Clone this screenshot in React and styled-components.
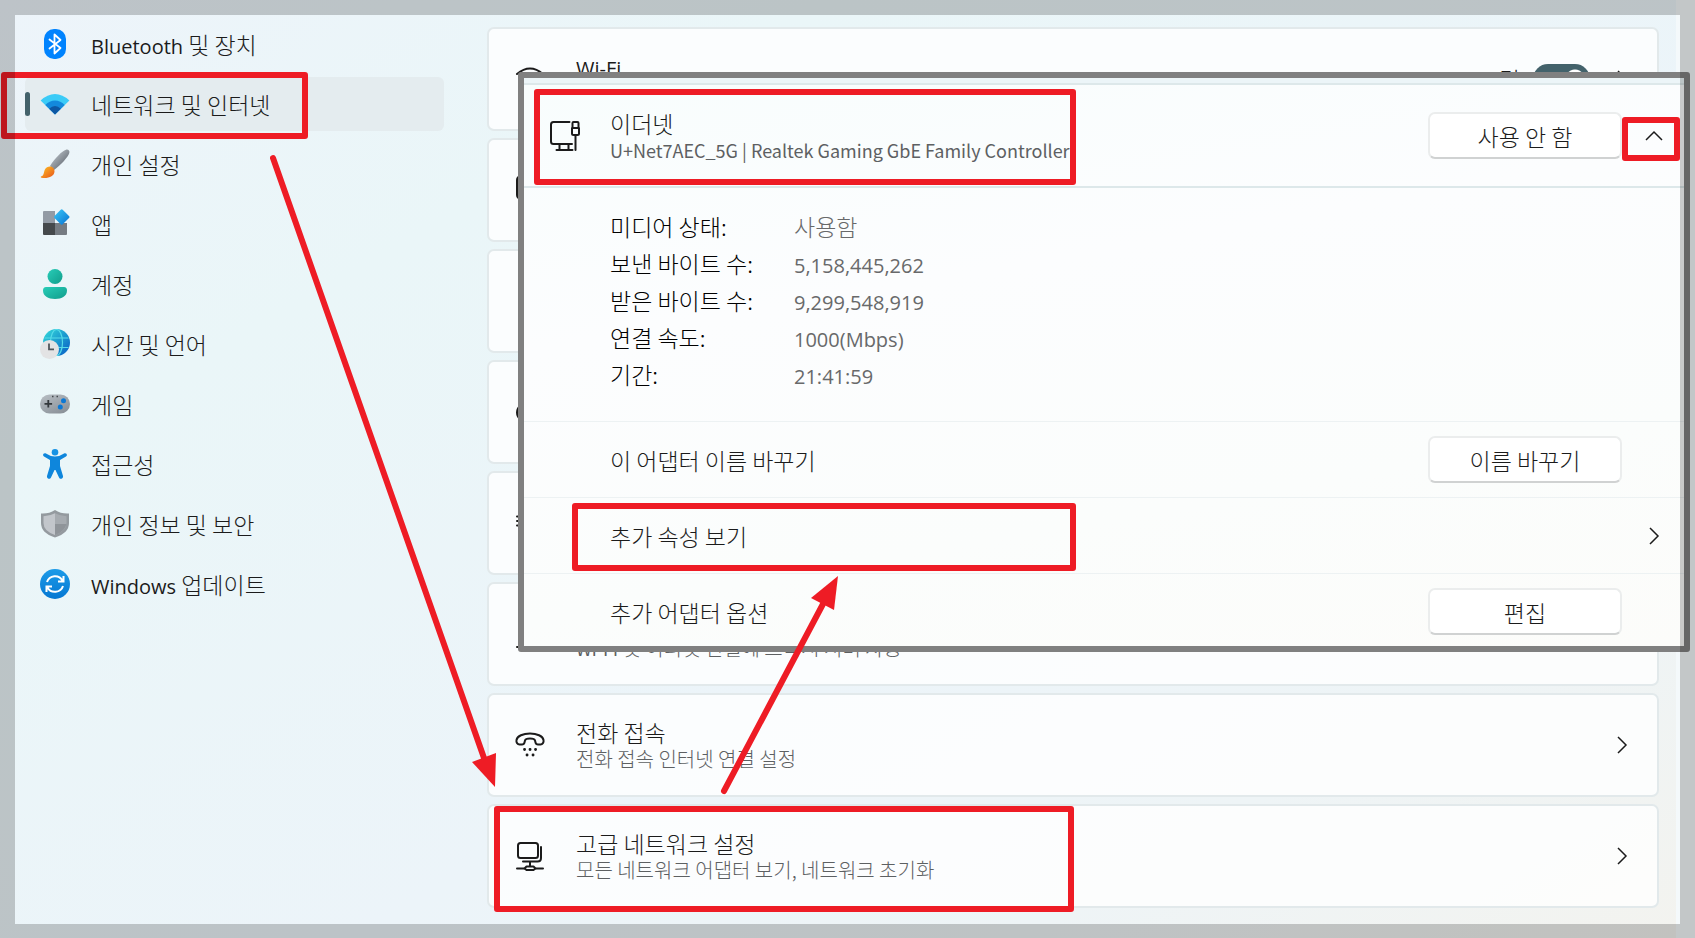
import React from "react";
import styled, { createGlobalStyle, css } from "styled-components";

const GlobalStyle = createGlobalStyle`
  * {
    box-sizing: border-box;
  }

  body {
    margin: 0;
    background: #f4f9fb;
    color: #1b1b1b;
    font-family: "Noto Sans CJK KR", "Noto Sans", sans-serif;
    font-weight: 300;
  }

  button {
    font: inherit;
    color: inherit;
  }
`;

const Page = styled.div`
  position: relative;
  min-height: 100vh;
  padding-right: 19px;
  overflow: hidden;
`;

const Desktop = styled.div`
  display: flex;
  min-height: 100vh;
  padding: 17px 17px 31px 25px;
  gap: 43px;
  background: linear-gradient(150deg, #edf4fa 0%, #eaf6f8 25%, #ecf4f9 60%, #eef4f6 80%, #f3f3ef 100%);
`;

/* translucent border that shades everything under it */
const Frame = styled.div`
  position: absolute;
  inset: 0;
  border: 15px solid rgba(0, 0, 0, 0.2);
  pointer-events: none;
`;

/* ---------- sidebar ---------- */

const Sidebar = styled.nav`
  flex: 0 0 419px;
`;

const NavList = styled.ul`
  display: flex;
  flex-direction: column;
  gap: 6px;
  margin: 0;
  padding: 0;
  list-style: none;
`;

const NavLink = styled.a`
  position: relative;
  display: flex;
  align-items: center;
  gap: 21px;
  height: 54px;
  padding-left: 15px;
  border-radius: 6px;
  color: inherit;
  font-size: 23px;
  line-height: 28px;
  text-decoration: none;

  ${(props) =>
    props.$active &&
    css`
      background: #e4ecef;

      &::before {
        content: "";
        position: absolute;
        left: 0;
        top: 15px;
        width: 5px;
        height: 24px;
        border-radius: 3px;
        background: #43626b;
      }
    `}
`;

const Latin = styled.span`
  font-family: "Open Sans", "Noto Sans", sans-serif;
  font-weight: 400;
  font-size: 20px;
  line-height: 1;
`;

const SmallLatin = styled(Latin)`
  font-family: "Noto Sans CJK KR", "Noto Sans", sans-serif;
  font-size: 18px;
`;

/* ---------- settings cards ---------- */

const Main = styled.main`
  flex: 1;
  display: flex;
  flex-direction: column;
  gap: 7px;
  padding-top: 10px;
`;

const Card = styled.div`
  display: flex;
  align-items: center;
  gap: 31px;
  width: 100%;
  height: 104px;
  padding: 0 26px;
  border: 2px solid #e2e9eb;
  border-radius: 7px;
  background: rgba(255, 255, 255, 0.8);
  text-align: left;
`;

const CardText = styled.span`
  flex: 1;
  display: flex;
  flex-direction: column;
`;

const Title = styled.span`
  min-height: 28px;
  font-size: 23px;
  line-height: 28px;
`;

const Subtitle = styled.span`
  min-height: 26px;
  font-size: 20px;
  line-height: 26px;
  color: #5d6062;
`;

const SwitchLabel = styled.label`
  display: flex;
  align-items: center;
  gap: 13px;
  font-size: 23px;
`;

const Switch = styled.input`
  appearance: none;
  width: 57px;
  height: 30px;
  margin: 0;
  border-radius: 15px;
  background: radial-gradient(circle at 42px 50%, #ffffff 9px, #43626b 10px);
`;

/* ---------- adapter panel ---------- */

const Panel = styled.section`
  position: absolute;
  top: 72px;
  left: 518px;
  right: 5px;
  height: 580px;
  padding-top: 5px;
  overflow: hidden;
  border: 6px solid #808080;
  border-radius: 3px;
  background: #ecf5f8;
`;

const PanelBody = styled.div`
  background: linear-gradient(170deg, #f8fdfd 0%, #fcfdfe 35%, #fbfdfc 70%, #fcfcfa 100%);
`;

const PanelRow = styled.div`
  display: flex;
  align-items: center;
  width: 100%;
  height: 76px;
  padding: 0 21px 0 86px;
  border: 0;
  border-top: 1px solid #edf2f3;
  background: none;
  text-align: left;
`;

const PanelHeader = styled(PanelRow)`
  height: 105px;
  padding-left: 26px;
  gap: 30px;
  border-top: 2px solid #dde8ea;
  border-bottom: 2px solid #dde8ea;
`;

const Details = styled.dl`
  display: grid;
  grid-template-columns: 184px 1fr;
  margin: 0;
  padding: 20px 0 28px 86px;
  font-size: 23px;
  line-height: 37px;
  color: #000000;

  dd {
    margin: 0;
    color: #68696a;
  }
`;

const Actions = styled.div`
  display: flex;
  align-items: center;
  gap: 23px;
`;

const Button = styled.button`
  width: 194px;
  height: 47px;
  padding: 0;
  border: 2px solid #ebeded;
  border-bottom-color: #d0d2d2;
  border-radius: 7px;
  background: #ffffff;
  font-size: 23px;
  line-height: 28px;
`;

const ChevronButton = styled.button`
  display: flex;
  padding: 0;
  border: 0;
  background: none;
`;

/* rows without a chevron keep its column free */
const ActionSlot = styled.span`
  width: 18px;
`;

const Annotations = styled.svg`
  position: absolute;
  inset: 0;
  width: 100%;
  height: 100%;
  pointer-events: none;
`;

/* ---------- icons ---------- */

const Icon = ({ children }) => (
  <svg width="30" height="30" viewBox="0 0 30 30" fill="none" aria-hidden="true">
    {children}
  </svg>
);

const Line = ({ children }) => (
  <svg
    width="30"
    height="30"
    viewBox="0 0 30 30"
    fill="none"
    stroke="#1b1b1b"
    strokeWidth="2"
    strokeLinecap="round"
    strokeLinejoin="round"
    aria-hidden="true"
  >
    {children}
  </svg>
);

const Chevron = ({ up }) => (
  <svg width="18" height="18" viewBox="0 0 18 18" fill="none" stroke="#1b1b1b" strokeWidth="1.5" aria-hidden="true">
    <path d={up ? "M1 13 9 5l8 8" : "M5 1l8 8-8 8"} />
  </svg>
);

const BluetoothIcon = () => (
  <Icon>
    <rect x="4" width="22" height="30" rx="10" fill="#0083fe" />
    <path d="M9.5 10.5l11 8.5-6 5.500V5.500l6 5.500-11 8.500" stroke="#fff" strokeWidth="1.8" strokeLinejoin="round" strokeLinecap="round" />
  </Icon>
);

const NetworkIcon = () => (
  <Icon>
    <path d="M15 25.500.600 11.500Q7.500 5 15 5t14.400 6.500z" fill="#3bcbf7" />
    <path d="M15 25.500 5.300 16Q9.500 11.500 15 11.500t9.700 4.500z" fill="#1389dc" />
    <path d="M15 25.500 9.200 19.800Q12 17 15 17t5.800 2.800z" fill="#0d57a3" />
  </Icon>
);

const BrushIcon = () => (
  <Icon>
    <defs>
      <linearGradient id="handle" x1="0" y1="0" x2="1" y2="1">
        <stop offset="0.2" stopColor="#b5bcc3" />
        <stop offset="0.8" stopColor="#666d75" />
      </linearGradient>
      <linearGradient id="bristle" x1="0" y1="0" x2="1" y2="1">
        <stop offset="0.1" stopColor="#fcb823" />
        <stop offset="0.8" stopColor="#ec6a1c" />
      </linearGradient>
    </defs>
    <path d="M10 17C15 9 22 2 26 .700c2-.700 4 1 3.300 3.300C28 8 21 16 14 21z" fill="url(#handle)" />
    <path d="M7 18.200c3.500-2 7.500 0 7.500 4 0 5-6 7.500-13 6.600-1-.300-1-1.200 0-1.500C5 26 3 20.500 7 18.200z" fill="url(#bristle)" />
  </Icon>
);

const AppsIcon = () => (
  <Icon>
    <defs>
      <linearGradient id="tile" x1="0" y1="0" x2="1" y2="1">
        <stop offset="0" stopColor="#3cc9f8" />
        <stop offset="1" stopColor="#0671d2" />
      </linearGradient>
    </defs>
    <path d="M4 2h11v12H3V3q0-1 1-1z" fill="#939ba5" />
    <path d="M3 14h12v12H4q-1 0-1-1z" fill="#45494c" />
    <path d="M15 14h12v11q0 1-1 1H15z" fill="#757b82" />
    <path d="M20.700.700q1-1 2 0l6.300 6.300q1 1 0 2l-6.300 6.300q-1 1-2 0L14.500 9q-1-1 0-2z" fill="url(#tile)" />
  </Icon>
);

const AccountIcon = () => (
  <Icon>
    <defs>
      <linearGradient id="person" x1="0" y1="0" x2="1" y2="1">
        <stop offset="0" stopColor="#28cdb8" />
        <stop offset="1" stopColor="#119d8b" />
      </linearGradient>
    </defs>
    <circle cx="15" cy="7.500" r="7.500" fill="url(#person)" />
    <path d="M6 18h18q3 0 3 3.500C27 27 22 30 15 30S3 27 3 21.500Q3 18 6 18z" fill="url(#person)" />
  </Icon>
);

const TimeIcon = () => (
  <Icon>
    <defs>
      <linearGradient id="globe" x1="0" y1="0" x2="1" y2="1">
        <stop offset="0.1" stopColor="#2fd0d8" />
        <stop offset="0.8" stopColor="#0f73c9" />
      </linearGradient>
    </defs>
    <circle cx="16.500" cy="13.500" r="13.500" fill="url(#globe)" />
    <g stroke="#56dbe8" strokeWidth="1.200">
      <ellipse cx="16.500" cy="13.500" rx="6" ry="13" />
      <path d="M4.500 9h24M4.500 18.500h24" />
    </g>
    <circle cx="9.500" cy="20.500" r="9.500" fill="#e3e3e4" />
    <path d="M9 14.500v5.800h5" stroke="#50565b" strokeWidth="1.800" />
  </Icon>
);

const GameIcon = () => (
  <Icon>
    <defs>
      <linearGradient id="pad" x1="0" y1="0" x2="0.700" y2="1">
        <stop offset="0" stopColor="#b9bfc5" />
        <stop offset="1" stopColor="#8b9299" />
      </linearGradient>
    </defs>
    <rect y="5.500" width="30" height="19" rx="9.500" fill="url(#pad)" />
    <path d="M8.300 11v7.500M4.500 14.800h7.600" stroke="#33383c" strokeWidth="1.800" />
    <circle cx="23.500" cy="11.800" r="2.500" fill="#0b78d4" />
    <circle cx="20.300" cy="18" r="2.500" fill="#0b78d4" />
    <path d="M12 7.500h1.500M16.500 7.500H18" stroke="#44494d" strokeWidth="1.400" />
  </Icon>
);

const AccessIcon = () => (
  <Icon>
    <circle cx="15" cy="3.300" r="3.300" fill="#1592e4" />
    <path
      d="M5.500 4.300Q10 7.500 15 7.500t9.500-3.200c2-.800 3.500 2 1.500 3.300L20 11v6l3 10c.500 2.500-3 4-4 1.500L15.500 21h-1L11 28.500c-1 2.500-4.500 1-4-1.500l3-10v-6L4 7.600C2 6.300 3.500 3.500 5.500 4.300z"
      fill="#0e86dc"
    />
  </Icon>
);

const ShieldIcon = () => (
  <Icon>
    <path d="M15 1q6 4 14 3.500V14q0 10-14 14.500Q1 24 1 14V4.500Q9 5 15 1z" fill="#949a9f" />
    <path d="M15 4.200q5 2.800 11.500 3V14q0 8-11.500 12z" fill="#a6abb0" />
    <path d="M15 4.200q-5 2.800-11.500 3V14q0 8 11.500 12z" fill="#c2c6cb" />
    <path d="M15 15h11.400Q25.500 22 15 26z" fill="#8f9499" />
  </Icon>
);

const UpdateIcon = () => (
  <Icon>
    <defs>
      <linearGradient id="update" x1="0" y1="0" x2="0" y2="1">
        <stop offset="0" stopColor="#1d9be8" />
        <stop offset="1" stopColor="#0577d2" />
      </linearGradient>
    </defs>
    <circle cx="15" cy="15" r="15" fill="url(#update)" />
    <path
      d="M7 13a8.500 8.500 0 0 1 15.500-1.500M23.500 7v5.500H18M23 17a8.500 8.500 0 0 1-15.500 1.500M6.500 23v-5.500H12"
      stroke="#fff"
      strokeWidth="2"
    />
  </Icon>
);

const WifiIcon = () => (
  <Line>
    <path d="M2 10q13-11 26 0M6 15q9-7 18 0M10 20q5-4 10 0" />
  </Line>
);

const EthernetIcon = () => (
  <Line>
    <path d="M19.500 1H3.500Q1 1 1 3.500v17Q1 23 3.500 23H22M9.500 23.500V29M18.500 23.500V29M6.500 29h16" />
    <path d="M22 7v5.500q0 1.500 1.500 1.500h4q1.500 0 1.500-1.500V7zM22.500 6.500V2q0-1 1-1h4q1 0 1 1v4.500M25.500 14.500V29" />
  </Line>
);

const MonitorIcon = () => (
  <Line>
    <rect x="2" y="1" width="26" height="23" rx="4" />
    <path d="M10 29h10" />
  </Line>
);

const VpnIcon = () => (
  <Line>
    <path d="M6 6h18v18H6z" />
  </Line>
);

const HotspotIcon = () => (
  <Line>
    <path d="M6 23Q2 20 2 15.500T6 8M24 23q3-3 3-7.500T24 8" />
    <circle cx="15" cy="15" r="3" />
  </Line>
);

const DataIcon = () => (
  <Line>
    <path d="M2 8.500h3M2 13h3M2 17.500h3M10 8.500h18M10 13h18M10 17.500h18" />
  </Line>
);

const ProxyIcon = () => (
  <Line>
    <circle cx="15" cy="13" r="9" />
    <path d="M2 28h26" />
  </Line>
);

const DialupIcon = () => (
  <Line>
    <path d="M4.500 14.500c-2 0-3.500-2-3-4.500C2.300 6 8 3.500 15 3.500S27.700 6 28.500 10c.500 2.500-1 4.500-3 4.500H23c-1.200 0-2.200-.800-2.500-2l-.500-2c-.400-1.500-2-2-5-2s-4.600.500-5 2l-.500 2c-.300 1.200-1.300 2-2.500 2z" />
    <path d="M9.500 19.500h.1M15 19.500h.1M20.500 19.500h.1M12 25h.1M18 25h.1" strokeWidth="2.800" />
  </Line>
);

const AdvancedIcon = () => (
  <Line>
    <rect x="3" y="2" width="20" height="15" rx="2.500" />
    <path d="M26 6v11q0 3.500-3.500 3.500H8M15 20.500v4M2 27.500h7M21 27.500h7" />
    <path d="M11.500 25.500h7l2 2-2 1.500h-7l-2-1.500z" />
  </Line>
);

/* ---------- data ---------- */

const navItems = [
  { icon: BluetoothIcon, latin: "Bluetooth", label: " 및 장치" },
  { icon: NetworkIcon, label: "네트워크 및 인터넷", active: true },
  { icon: BrushIcon, label: "개인 설정" },
  { icon: AppsIcon, label: "앱" },
  { icon: AccountIcon, label: "계정" },
  { icon: TimeIcon, label: "시간 및 언어" },
  { icon: GameIcon, label: "게임" },
  { icon: AccessIcon, label: "접근성" },
  { icon: ShieldIcon, label: "개인 정보 및 보안" },
  { icon: UpdateIcon, latin: "Windows", label: " 업데이트" },
];

const cards = [
  { icon: MonitorIcon },
  { icon: VpnIcon },
  { icon: HotspotIcon },
  { icon: DataIcon },
  { icon: ProxyIcon, latin: "Wi-Fi", sub: " 및 이더넷 연결에 프록시 서버 사용" },
  { icon: DialupIcon, title: "전화 접속", sub: "전화 접속 인터넷 연결 설정" },
  { icon: AdvancedIcon, title: "고급 네트워크 설정", sub: "모든 네트워크 어댑터 보기, 네트워크 초기화" },
];

const details = [
  { term: "미디어 상태:", value: "사용함" },
  { term: "보낸 바이트 수:", value: <Latin>5,158,445,262</Latin> },
  { term: "받은 바이트 수:", value: <Latin>9,299,548,919</Latin> },
  { term: "연결 속도:", value: <Latin>1000(Mbps)</Latin> },
  { term: "기간:", value: <Latin>21:41:59</Latin> },
];

function Navigation() {
  return (
    <Sidebar>
      <NavList>
        {navItems.map(({ icon: NavIcon, latin, label, active }) => (
          <li key={label}>
            <NavLink href="#" $active={active} aria-current={active ? "page" : undefined}>
              <NavIcon />
              <span>
                {latin && <Latin>{latin}</Latin>}
                {label}
              </span>
            </NavLink>
          </li>
        ))}
      </NavList>
    </Sidebar>
  );
}

function SettingsCards() {
  return (
    <Main>
      <Card>
        <WifiIcon />
        <CardText>
          <Title>
            <Latin>Wi-Fi</Latin>
          </Title>
          <Subtitle />
        </CardText>
        <Actions>
          <SwitchLabel>
            켬
            <Switch type="checkbox" defaultChecked />
          </SwitchLabel>
          <Chevron />
        </Actions>
      </Card>
      {cards.map(({ icon: CardIcon, title, latin, sub }, index) => (
        <Card as="button" type="button" key={index}>
          <CardIcon />
          <CardText>
            <Title>{title}</Title>
            <Subtitle>
              {latin && <SmallLatin>{latin}</SmallLatin>}
              {sub}
            </Subtitle>
          </CardText>
          <Chevron />
        </Card>
      ))}
    </Main>
  );
}

function AdapterPanel() {
  return (
    <Panel>
      <PanelBody>
        <PanelHeader>
          <EthernetIcon />
          <CardText>
            <Title>이더넷</Title>
            <Subtitle>
              <SmallLatin>U+Net7AEC_5G | Realtek Gaming GbE Family Controller</SmallLatin>
            </Subtitle>
          </CardText>
          <Actions>
            <Button type="button">사용 안 함</Button>
            <ChevronButton type="button" aria-label="접기">
              <Chevron up />
            </ChevronButton>
          </Actions>
        </PanelHeader>
        <Details>
          {details.map(({ term, value }) => (
            <React.Fragment key={term}>
              <dt>{term}</dt>
              <dd>{value}</dd>
            </React.Fragment>
          ))}
        </Details>
        <PanelRow>
          <CardText>
            <Title>이 어댑터 이름 바꾸기</Title>
          </CardText>
          <Actions>
            <Button type="button">이름 바꾸기</Button>
            <ActionSlot />
          </Actions>
        </PanelRow>
        <PanelRow as="button" type="button">
          <CardText>
            <Title>추가 속성 보기</Title>
          </CardText>
          <Chevron />
        </PanelRow>
        <PanelRow>
          <CardText>
            <Title>추가 어댑터 옵션</Title>
          </CardText>
          <Actions>
            <Button type="button">편집</Button>
            <ActionSlot />
          </Actions>
        </PanelRow>
      </PanelBody>
    </Panel>
  );
}

function Guide() {
  return (
    <Annotations aria-hidden="true">
      <g fill="none" stroke="#ee1c25" strokeWidth="6" strokeLinejoin="round" strokeLinecap="round">
        <rect x="4" y="75" width="301" height="61" />
        <rect x="537" y="92" width="536" height="90" />
        <rect x="1625" y="120" width="52" height="38" />
        <rect x="575" y="506" width="498" height="62" />
        <rect x="497" y="809" width="574" height="100" />
        <path d="M273 158 484 758M724 791 823 604" />
      </g>
      <g fill="#ee1c25">
        <path d="M472 762 496 753 495 787z" />
        <path d="M811 598 834 610 838 576z" />
      </g>
    </Annotations>
  );
}

function App() {
  return (
    <>
      <GlobalStyle />
      <Page>
        <Desktop>
          <Navigation />
          <SettingsCards />
        </Desktop>
        <AdapterPanel />
        <Guide />
        <Frame />
      </Page>
    </>
  );
}

export default App;
